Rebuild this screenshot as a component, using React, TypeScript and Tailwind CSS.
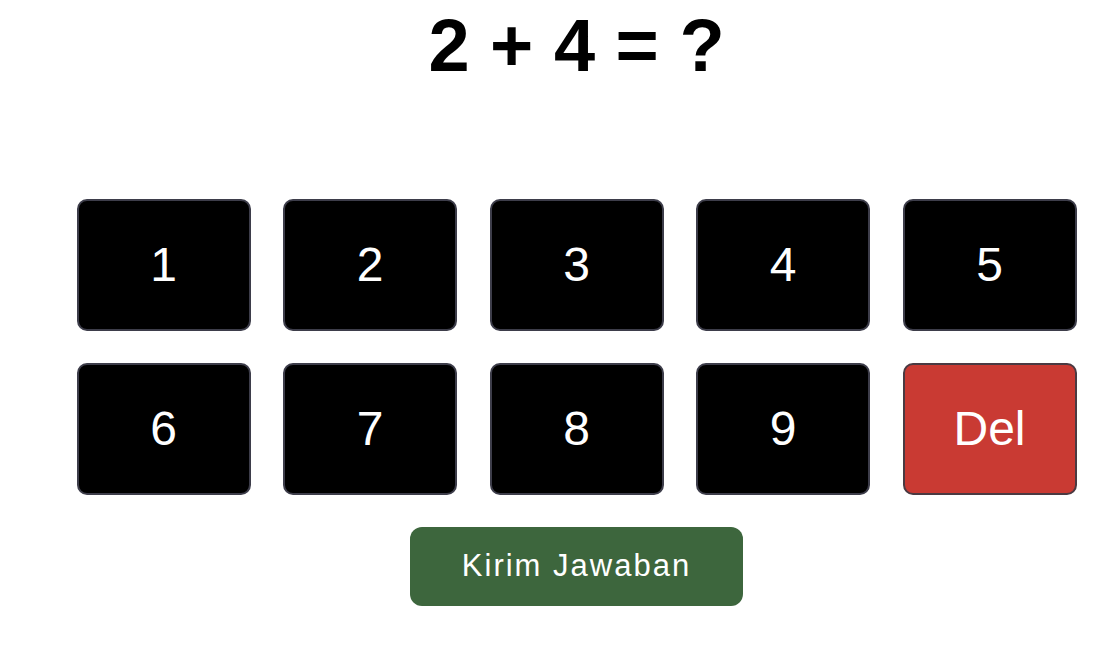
import React from "react";

const keys = ["1", "2", "3", "4", "5", "6", "7", "8", "9"];

export default function App() {
  return (
    <div className="min-h-screen bg-white pl-[49px] font-['Liberation_Sans',Arial,sans-serif]">
      <div className="flex flex-col items-center">
        {/* soal */}
        <h1 className="mt-[9px] text-[74px] font-bold leading-none text-black">2 + 4 = ?</h1>

        {/* keypad */}
        <div className="mt-[116px] grid grid-cols-5 gap-x-[32.5px] gap-y-[32px]">
          {keys.map((k) => (
            <button
              key={k}
              className="flex h-[132px] w-[174px] items-center justify-center rounded-[10px] border-2 border-[#3d3d4a] bg-black text-5xl text-white"
            >
              {k}
            </button>
          ))}
          <button className="flex h-[132px] w-[174px] items-center justify-center rounded-[10px] border-2 border-[#4a3a42] bg-[#c93a33] text-5xl text-white">
            Del
          </button>
        </div>

        <button className="mt-[32px] flex h-[79px] w-[333px] items-center justify-center rounded-[12px] bg-[#3d663d] text-[31px] tracking-[2px] text-white">
          Kirim Jawaban
        </button>
      </div>
    </div>
  );
}
